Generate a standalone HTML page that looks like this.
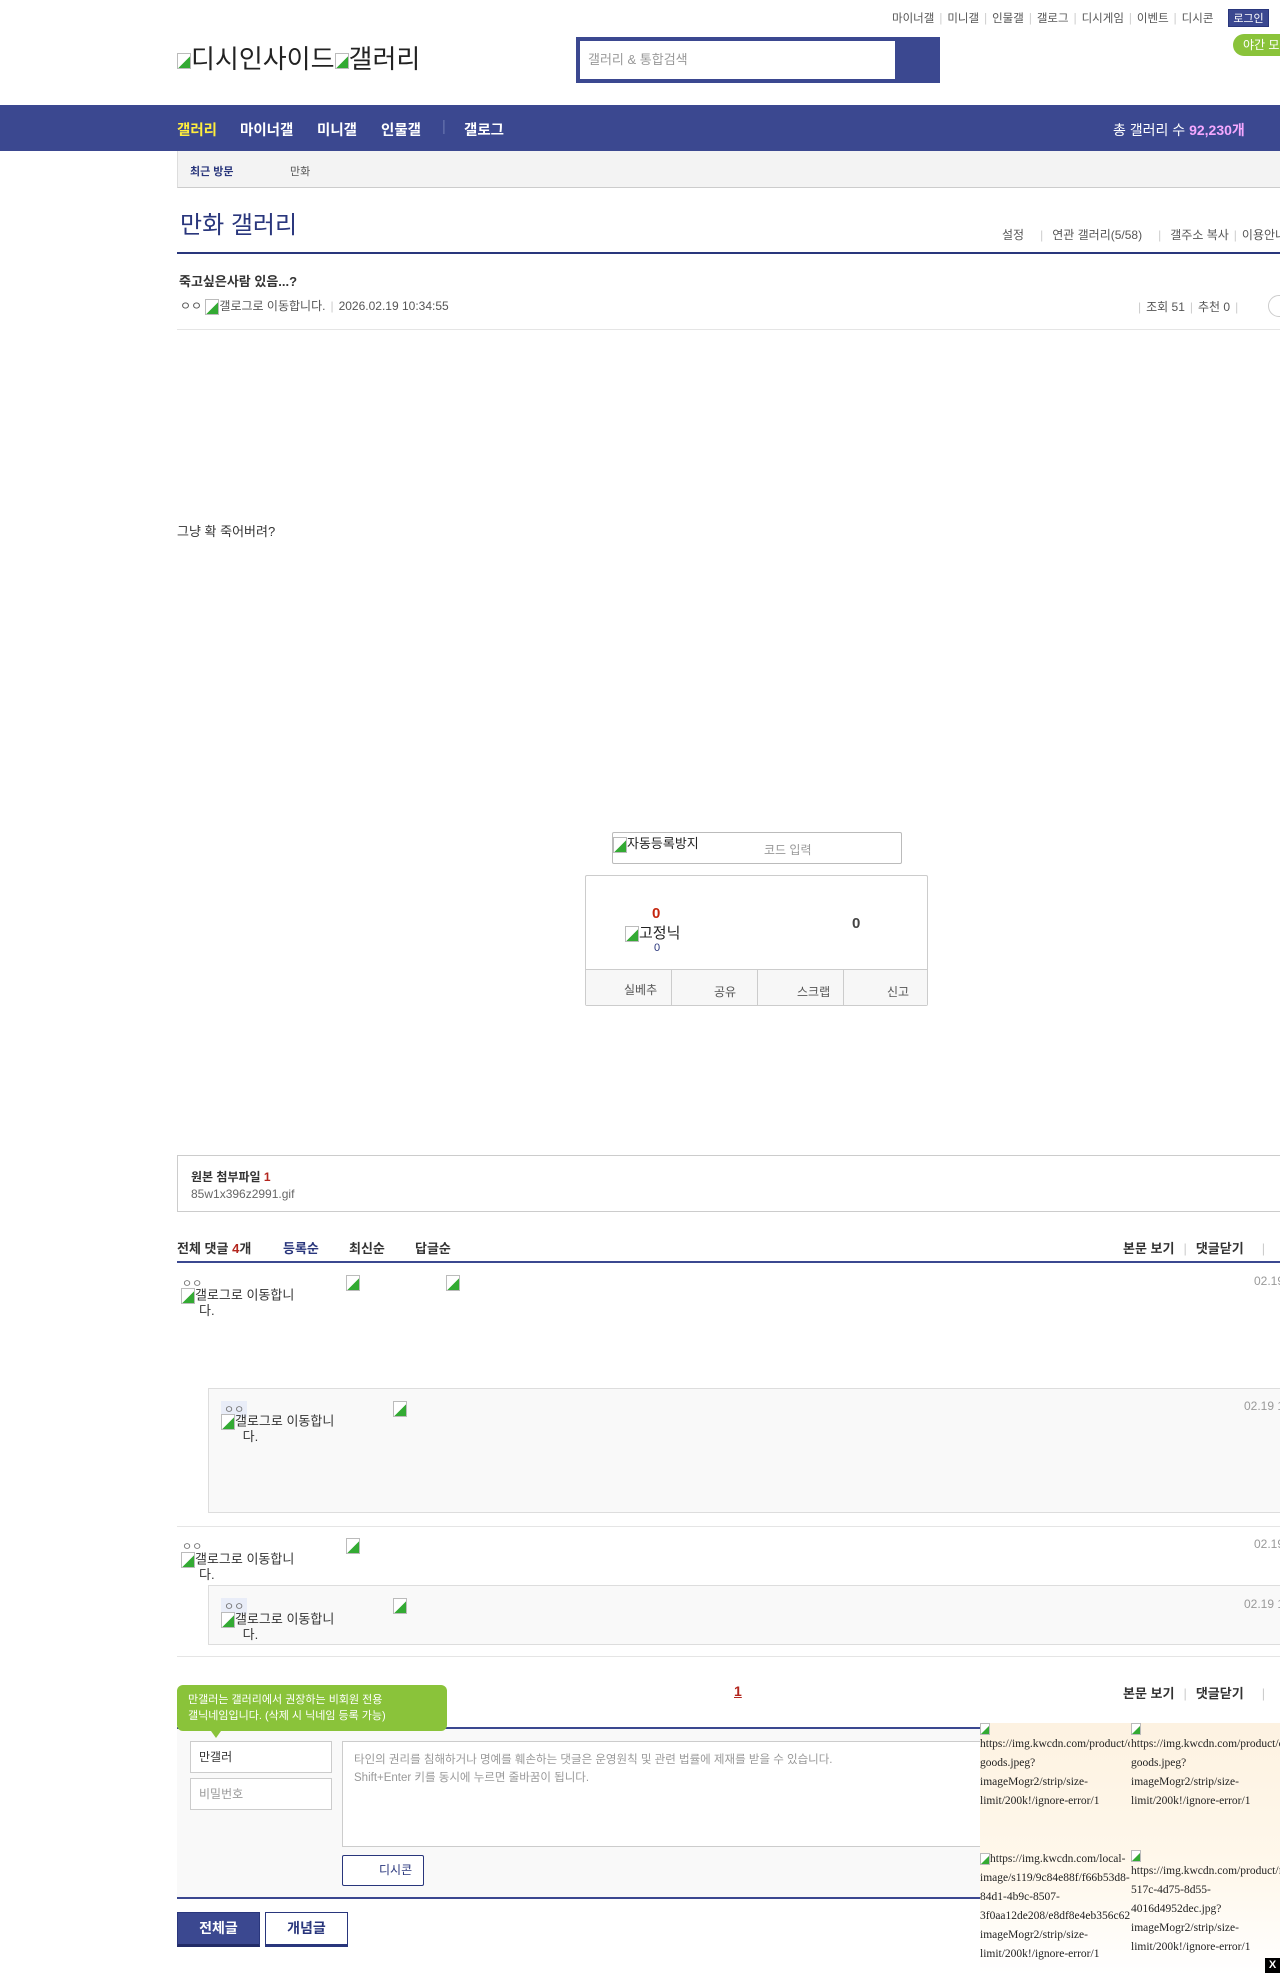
<!DOCTYPE html>
<html><head><meta charset="utf-8">
<style>
*{margin:0;padding:0;box-sizing:border-box}
body{width:1280px;height:1973px;overflow:hidden;position:relative;background:#fff;font-family:"Liberation Sans","Noto Sans CJK KR",sans-serif;color:#333;font-size:12px}
.a{position:absolute;white-space:nowrap}
.sep{color:#ccc;margin:0 5px}
.cm{color:#777;font-size:11px}
.gi{display:inline-block;width:14px;height:16px;border:1px solid #bbb;background:linear-gradient(135deg,#fff 55%,#3a3 56%);vertical-align:middle}
.nv{position:absolute;top:119px;font-size:14.5px;font-weight:bold;color:#fff;white-space:nowrap}
.ad div{position:absolute;width:150px;overflow:hidden}
.ad p{white-space:nowrap;overflow:hidden}
</style></head><body>
<!-- top links -->
<div class="a" style="top:10px;left:892px;font-size:11.5px;color:#555">마이너갤<span class="sep">|</span>미니갤<span class="sep">|</span>인물갤<span class="sep">|</span>갤로그<span class="sep">|</span>디시게임<span class="sep">|</span>이벤트<span class="sep">|</span>디시콘</div>
<div class="a" style="top:9px;left:1228px;width:41px;height:18px;background:#3b4890;color:#fff;font-size:11px;line-height:18px;text-align:center;border:1px solid #29367c">로그인</div>
<div class="a" style="top:34px;left:1233px;width:60px;height:22px;background:#8ac33a;border-radius:11px;color:#fff;font-size:12px;line-height:22px;padding-left:10px">야간 모드</div>
<!-- logo -->
<div class="a" style="top:39px;left:177px;font-size:26px;color:#222"><span class="gi"></span>디시인사이드<span class="gi"></span>갤러리</div>
<!-- search -->
<div class="a" style="top:37px;left:576px;width:364px;height:46px;background:#3b4890"></div>
<div class="a" style="top:41px;left:580px;width:315px;height:38px;background:#fff;color:#999;font-size:13px;line-height:38px;padding-left:8px">갤러리 &amp; 통합검색</div>
<!-- nav -->
<div class="a" style="top:105px;left:0;width:1280px;height:46px;background:#3b4890"></div>
<div class="nv" style="left:177px;color:#ffed3d">갤러리</div>
<div class="nv" style="left:240px">마이너갤</div>
<div class="nv" style="left:317px">미니갤</div>
<div class="nv" style="left:381px">인물갤</div>
<div class="nv" style="left:442px;color:#6a76b0;font-weight:normal">|</div>
<div class="nv" style="left:464px">갤로그</div>
<div class="a" style="top:120px;left:1113px;font-size:14px;color:#fff">총 갤러리 수 <b style="color:#f5a8ff">92,230개</b></div>
<div class="a" style="top:151px;left:177px;width:1103px;height:37px;background:#f3f3f3;border-bottom:1px solid #ccc;border-left:1px solid #ddd"></div>
<div class="a" style="top:163px;left:190px;font-size:11px;font-weight:bold;color:#29367c">최근 방문</div>
<div class="a" style="top:163px;left:290px;font-size:11px;color:#555">만화</div>
<!-- title -->
<div class="a" style="top:205px;left:180px;font-size:24px;color:#29367c">만화 갤러리</div>
<div class="a" style="top:226px;left:1002px;font-size:12px;color:#555">설정<span class="sep" style="margin:0 9px 0 16px">|</span>연관 갤러리(5/58)<span class="sep" style="margin:0 9px 0 16px">|</span>갤주소 복사<span class="sep">|</span>이용안내</div>
<div class="a" style="top:252px;left:177px;width:1103px;height:2px;background:#29367c"></div>
<div class="a" style="top:271px;left:179px;font-size:13px;font-weight:bold;color:#333">죽고싶은사람 있음...?</div>
<div class="a" style="top:297px;left:180px;font-size:12px;color:#555">ㅇㅇ <span class="gi"></span>갤로그로 이동합니다.<span class="sep">|</span>2026.02.19 10:34:55</div>
<div class="a" style="top:298px;left:1133px;font-size:12px;color:#555"><span class="sep">|</span>조회 51<span class="sep">|</span>추천 0<span class="sep">|</span></div>
<div class="a" style="top:295px;left:1268px;width:24px;height:22px;border:1px solid #ccc;border-radius:11px"></div>
<div class="a" style="top:329px;left:177px;width:1103px;height:1px;background:#e5e5e5"></div>
<div class="a" style="top:521px;left:177px;font-size:13px;color:#333">그냥 확 죽어버려?</div>
<!-- captcha -->
<div class="a" style="top:832px;left:612px;width:290px;height:32px;border:1px solid #bbb;border-radius:2px"></div>
<div class="a" style="top:833px;left:613px;font-size:13px;color:#222"><span class="gi"></span>자동등록방지</div>
<div class="a" style="top:841px;left:764px;font-size:12px;color:#999">코드 입력</div>
<!-- recommend -->
<div class="a" style="top:875px;left:585px;width:343px;height:131px;border:1px solid #ccc;border-radius:2px"></div>
<div class="a" style="top:905px;left:652px;font-size:15px;font-weight:bold;color:#c4260f">0</div>
<div class="a" style="top:922px;left:625px;font-size:15px;color:#222"><span class="gi"></span>고정닉</div>
<div class="a" style="top:942px;left:654px;font-size:11px;color:#29367c">0</div>
<div class="a" style="top:915px;left:852px;font-size:15px;font-weight:bold;color:#444">0</div>
<div class="a" style="top:969px;left:586px;width:341px;height:36px;background:#f7f7f7;border-top:1px solid #ccc"></div>
<div class="a" style="top:970px;left:671px;width:1px;height:35px;background:#ccc"></div>
<div class="a" style="top:970px;left:757px;width:1px;height:35px;background:#ccc"></div>
<div class="a" style="top:970px;left:843px;width:1px;height:35px;background:#ccc"></div>
<div class="a" style="top:981px;left:624px;font-size:12px;color:#555">실베추</div>
<div class="a" style="top:983px;left:714px;font-size:12px;color:#555">공유</div>
<div class="a" style="top:983px;left:797px;font-size:12px;color:#555">스크랩</div>
<div class="a" style="top:983px;left:887px;font-size:12px;color:#555">신고</div>
<!-- attachment -->
<div class="a" style="top:1155px;left:177px;width:1110px;height:57px;border:1px solid #ccc"></div>
<div class="a" style="top:1168px;left:191px;font-size:12px;font-weight:bold;color:#333">원본 첨부파일 <span style="color:#b3261e">1</span></div>
<div class="a" style="top:1187px;left:191px;font-size:12px;color:#666">85w1x396z2991.gif</div>
<!-- comments header -->
<div class="a" style="top:1238px;left:177px;font-size:13px;font-weight:bold;color:#333">전체 댓글 <span style="color:#b3261e">4</span>개</div>
<div class="a" style="top:1238px;left:283px;font-size:13px;font-weight:bold;color:#29367c">등록순</div>
<div class="a" style="top:1238px;left:349px;font-size:13px;font-weight:bold;color:#333">최신순</div>
<div class="a" style="top:1238px;left:415px;font-size:13px;font-weight:bold;color:#333">답글순</div>
<div class="a" style="top:1238px;left:1123px;font-size:13px;font-weight:bold;color:#333">본문 보기<span class="sep" style="font-weight:normal;margin:0 9px">|</span>댓글닫기<span class="sep" style="font-weight:normal;margin:0 18px">|</span></div>
<div class="a" style="top:1261px;left:177px;width:1103px;height:2px;background:#3b4890"></div>
<!-- comment 1 -->
<div class="a cm" style="top:1275px;left:182px">ㅇㅇ</div>
<div class="a" style="top:1288px;left:181px;font-size:13px;color:#333;line-height:13px"><span class="gi"></span>갤로그로 이동합니<br>&nbsp;&nbsp;&nbsp;&nbsp;&nbsp;다.</div>
<div class="a" style="top:1275px;left:346px"><span class="gi"></span></div>
<div class="a" style="top:1275px;left:446px"><span class="gi"></span></div>
<div class="a" style="top:1274px;left:1254px;font-size:12px;color:#999">02.19 10:35:12</div>
<div class="a" style="top:1388px;left:208px;width:1080px;height:125px;background:#f9f9f9;border:1px solid #ddd"></div>
<div class="a cm" style="top:1401px;left:221px;background:#e9edf8;padding:0 3px">ㅇㅇ</div>
<div class="a" style="top:1414px;left:221px;font-size:13px;color:#333;line-height:13px"><span class="gi"></span>갤로그로 이동합니<br>&nbsp;&nbsp;&nbsp;&nbsp;&nbsp;&nbsp;다.</div>
<div class="a" style="top:1401px;left:393px"><span class="gi"></span></div>
<div class="a" style="top:1399px;left:1244px;font-size:12px;color:#999">02.19 10:40:01</div>
<div class="a" style="top:1526px;left:177px;width:1103px;height:1px;background:#e5e5e5"></div>
<!-- comment 2 -->
<div class="a cm" style="top:1538px;left:182px">ㅇㅇ</div>
<div class="a" style="top:1552px;left:181px;font-size:13px;color:#333;line-height:13px"><span class="gi"></span>갤로그로 이동합니<br>&nbsp;&nbsp;&nbsp;&nbsp;&nbsp;다.</div>
<div class="a" style="top:1538px;left:346px"><span class="gi"></span></div>
<div class="a" style="top:1537px;left:1254px;font-size:12px;color:#999">02.19 10:38:44</div>
<div class="a" style="top:1585px;left:208px;width:1080px;height:60px;background:#f9f9f9;border:1px solid #ddd"></div>
<div class="a cm" style="top:1598px;left:221px;background:#e9edf8;padding:0 3px">ㅇㅇ</div>
<div class="a" style="top:1612px;left:221px;font-size:13px;color:#333;line-height:13px"><span class="gi"></span>갤로그로 이동합니<br>&nbsp;&nbsp;&nbsp;&nbsp;&nbsp;&nbsp;다.</div>
<div class="a" style="top:1598px;left:393px"><span class="gi"></span></div>
<div class="a" style="top:1597px;left:1244px;font-size:12px;color:#999">02.19 10:41:20</div>
<div class="a" style="top:1656px;left:177px;width:1103px;height:1px;background:#e5e5e5"></div>
<!-- paging -->
<div class="a" style="top:1683px;left:734px;font-size:14px;font-weight:bold;color:#b3261e;text-decoration:underline">1</div>
<div class="a" style="top:1683px;left:1123px;font-size:13px;font-weight:bold;color:#333">본문 보기<span class="sep" style="font-weight:normal;margin:0 9px">|</span>댓글닫기<span class="sep" style="font-weight:normal;margin:0 18px">|</span></div>
<!-- write form -->
<div class="a" style="top:1727px;left:177px;width:1103px;height:172px;background:#f9f9f9;border-top:2px solid #3b4890;border-bottom:2px solid #3b4890"></div>
<div class="a" style="top:1685px;left:177px;width:270px;height:46px;background:#8ac33a;border-radius:6px;color:#fff;font-size:11px;line-height:16px;padding:7px 11px">만갤러는 갤러리에서 권장하는 비회원 전용<br>갤닉네임입니다. (삭제 시 닉네임 등록 가능)</div>
<div class="a" style="top:1731px;left:211px;width:0;height:0;border-left:5px solid transparent;border-right:5px solid transparent;border-top:7px solid #8ac33a"></div>
<div class="a" style="top:1741px;left:190px;width:142px;height:32px;background:#fff;border:1px solid #ccc;font-size:12px;line-height:30px;padding-left:8px;color:#333">만갤러</div>
<div class="a" style="top:1778px;left:190px;width:142px;height:32px;background:#fff;border:1px solid #ccc;font-size:12px;line-height:30px;padding-left:8px;color:#999">비밀번호</div>
<div class="a" style="top:1741px;left:342px;width:700px;height:106px;background:#fff;border:1px solid #ccc;font-size:11.5px;line-height:18px;padding:9px 11px;color:#999">타인의 권리를 침해하거나 명예를 훼손하는 댓글은 운영원칙 및 관련 법률에 제재를 받을 수 있습니다.<br>Shift+Enter 키를 동시에 누르면 줄바꿈이 됩니다.</div>
<div class="a" style="top:1855px;left:342px;width:82px;height:31px;background:#fff;border:1px solid #29367c;border-radius:2px;font-size:12px;line-height:29px;padding-left:36px;color:#29367c">디시콘</div>
<div class="a" style="top:1912px;left:177px;width:83px;height:35px;background:#3b4890;border:1px solid #29367c;border-bottom:3px solid #222b66;color:#fff;font-size:14px;font-weight:bold;text-align:center;line-height:30px">전체글</div>
<div class="a" style="top:1912px;left:265px;width:83px;height:35px;background:#fff;border:1px solid #29367c;border-bottom:3px solid #29367c;color:#29367c;font-size:14px;font-weight:bold;text-align:center;line-height:30px">개념글</div>
<!-- ad -->
<div class="a ad" style="top:1723px;left:980px;width:300px;height:250px;background:linear-gradient(180deg,#fdf2e1 0%,#fff8ec 60%,#fff 100%);font-family:'Liberation Serif',serif;font-size:11.5px;color:#222;line-height:19px;overflow:hidden">
<div style="left:0;top:0"><span class="gi" style="width:10px;height:12px;display:block"></span><p>https://img.kwcdn.com/product/open/goods.jpeg</p><p>goods.jpeg?</p><p>imageMogr2/strip/size-</p><p>limit/200k!/ignore-error/1</p></div>
<div style="left:151px;top:0"><span class="gi" style="width:10px;height:12px;display:block"></span><p>https://img.kwcdn.com/product/open/goods.jpeg</p><p>goods.jpeg?</p><p>imageMogr2/strip/size-</p><p>limit/200k!/ignore-error/1</p></div>
<div style="left:0;top:127px"><p><span class="gi" style="width:10px;height:12px"></span>https://img.kwcdn.com/local-</p><p>image/s119/9c84e88f/f66b53d8-</p><p>84d1-4b9c-8507-</p><p>3f0aa12de208/e8df8e4eb356c622</p><p>imageMogr2/strip/size-</p><p>limit/200k!/ignore-error/1</p></div>
<div style="left:151px;top:127px"><span class="gi" style="width:10px;height:12px;display:block"></span><p>https://img.kwcdn.com/product/fancy</p><p>517c-4d75-8d55-</p><p>4016d4952dec.jpg?</p><p>imageMogr2/strip/size-</p><p>limit/200k!/ignore-error/1</p></div>
</div>
<div class="a" style="top:1958px;left:1265px;width:15px;height:15px;background:#000;color:#fff;font-size:11px;font-weight:bold;text-align:center;line-height:15px">X</div>
</body></html>
